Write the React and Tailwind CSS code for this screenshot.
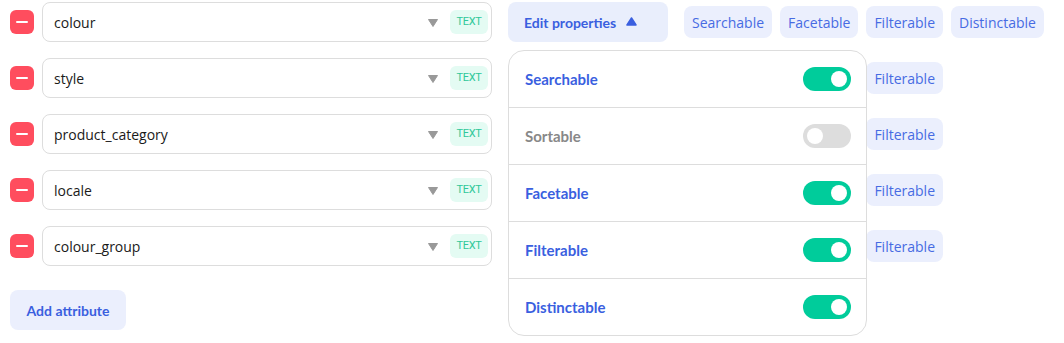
import React from "react";

const rows = ["colour", "style", "product_category", "locale", "colour_group"];

function Chip({ children }) {
  return (
    <span className="flex h-8 items-center rounded-lg bg-[#ebeffd] px-2 text-[14px] text-[#476be3]" style={{ fontFamily: '"Open Sans", sans-serif' }}>
      {children}
    </span>
  );
}

function Toggle({ on }) {
  return (
    <span className={`relative flex h-6 w-12 items-center rounded-full ${on ? "bg-[#00cc9b]" : "bg-[#dddddd]"}`}>
      <span className={`absolute top-1 h-4 w-4 rounded-full bg-white ${on ? "left-[28px]" : "left-1"}`} />
    </span>
  );
}

const props = [
  ["Searchable", true],
  ["Sortable", false],
  ["Facetable", true],
  ["Filterable", true],
  ["Distinctable", true],
];

export default function App() {
  const geo = { fontFamily: 'Lato, "Noto Sans", sans-serif' };
  return (
    <div className="relative h-[343px] w-[1064px] bg-white pt-[2px]" style={{ fontFamily: '"Open Sans", sans-serif' }}>
      <div className="flex flex-col gap-4">
        {rows.map((name, i) => (
          <div key={name} className="flex items-center">
            <div className="ml-[10px] flex h-6 w-6 items-center justify-center rounded-md bg-[#ff4d5e]">
              <span className="h-[2px] w-3 rounded bg-white" />
            </div>
            <div className="ml-2 flex h-10 w-[450px] items-center rounded-lg border border-[#dddddd] pl-[11px] pr-[3px]">
              <span className="flex-1 text-[14px] text-[#1a1a1a]">{name}</span>
              <svg width="10" height="8" viewBox="0 0 10 8" className="mr-3 mt-[2px]">
                <path d="M0.5 0.5 H9.5 L5 7.5 Z" fill="#999999" stroke="#999999" strokeLinejoin="round" />
              </svg>
              <span className="flex h-6 w-[38px] items-center justify-center rounded-md bg-[#e4fbf3] text-[11px] tracking-tight text-[#2fc89a]" style={{ fontFamily: '"Liberation Sans Narrow", "Roboto", sans-serif' }}>TEXT</span>
            </div>
            <div className="ml-4 w-[160px]">
              {i === 0 && (
                <div className="flex h-10 items-center rounded-lg bg-[#e9eefc] pl-4 text-[14px] font-bold text-[#3a5fdf]" style={geo}>
                  Edit properties
                  <svg width="11" height="9" viewBox="0 0 11 9" className="ml-[10px] mb-[2px]">
                    <path d="M1 8 H10 L5.5 1 Z" fill="#3a5fdf" stroke="#3a5fdf" strokeWidth="1.5" strokeLinejoin="round" />
                  </svg>
                </div>
              )}
            </div>
            <div className="ml-4 flex gap-2">
              <Chip>Searchable</Chip>
              <Chip>Facetable</Chip>
              <Chip>Filterable</Chip>
              {i === 0 && <Chip>Distinctable</Chip>}
            </div>
          </div>
        ))}
      </div>
      <div className="ml-[10px] mt-6 flex h-10 w-[116px] items-center justify-center rounded-lg bg-[#ebeffd] text-[14px] font-bold text-[#3a5fdf]" style={geo}>
        Add attribute
      </div>

      <div className="absolute left-[508px] top-[50px] flex w-[359px] flex-col rounded-2xl border border-[#dddddd] bg-white">
        {props.map(([label, on], i) => (
          <div key={label} className={`flex items-center justify-between pl-4 pr-[15px] ${i > 0 ? "h-[57px] border-t border-[#dddddd]" : "h-[56px]"}`}>
            <span className={`text-[15px] font-bold ${on ? "text-[#3a5fdf]" : "text-[#888888]"}`} style={geo}>{label}</span>
            <Toggle on={on} />
          </div>
        ))}
      </div>
    </div>
  );
}
